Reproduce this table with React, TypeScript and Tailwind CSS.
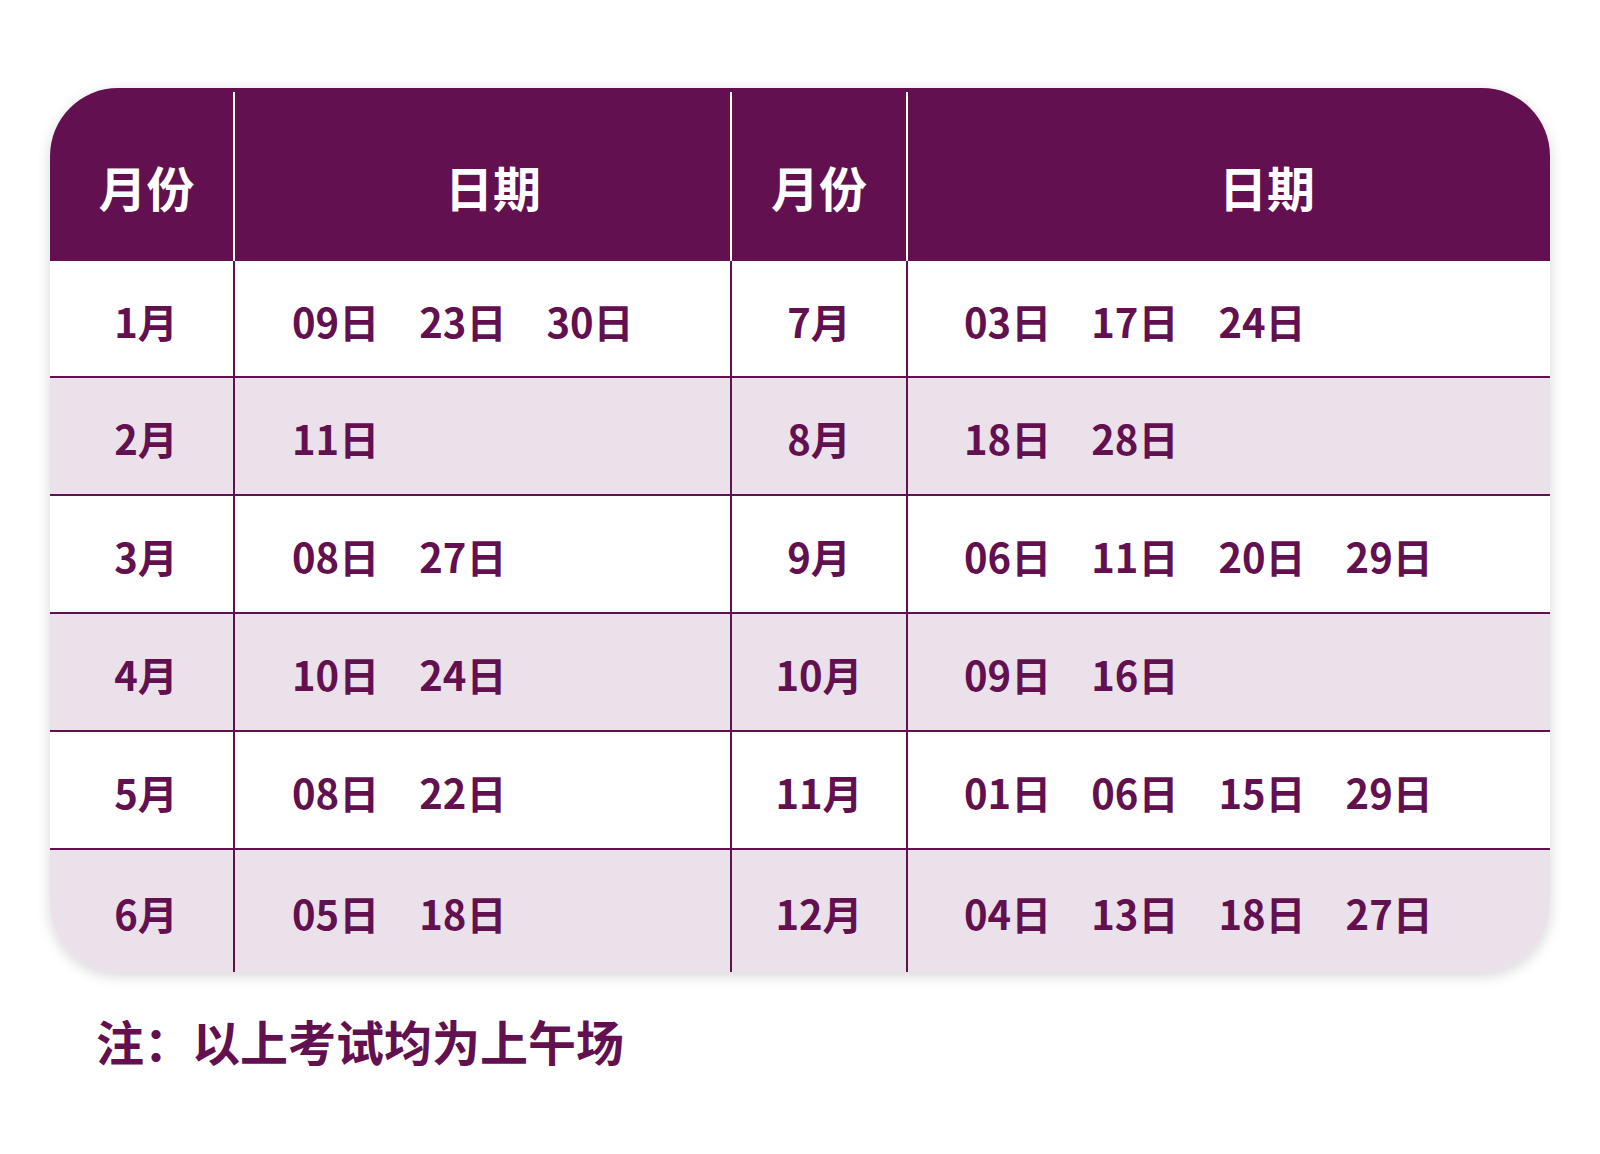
import React from 'react';

type Row = { m1: string; d1: string[]; m2: string; d2: string[] };

const rows: Row[] = [
  { m1: '1月', d1: ['09日', '23日', '30日'], m2: '7月', d2: ['03日', '17日', '24日'] },
  { m1: '2月', d1: ['11日'], m2: '8月', d2: ['18日', '28日'] },
  { m1: '3月', d1: ['08日', '27日'], m2: '9月', d2: ['06日', '11日', '20日', '29日'] },
  { m1: '4月', d1: ['10日', '24日'], m2: '10月', d2: ['09日', '16日'] },
  { m1: '5月', d1: ['08日', '22日'], m2: '11月', d2: ['01日', '06日', '15日', '29日'] },
  { m1: '6月', d1: ['05日', '18日'], m2: '12月', d2: ['04日', '13日', '18日', '27日'] },
];

const heights = ['h-[117px]', 'h-[118px]', 'h-[118px]', 'h-[118px]', 'h-[118px]', 'h-[122px]'];

const App: React.FC = () => {
  return (
    <div
      className="min-h-[1154px] w-[1600px] bg-white pt-[88px] pl-[50px]"
      style={{ fontFamily: '"Noto Sans CJK SC", "Noto Sans", sans-serif' }}
    >
      <div className="w-[1500px] overflow-hidden rounded-[68px] bg-white shadow-[0_4px_14px_rgba(0,0,0,0.16)]">
        {/* header */}
        <div className="bg-[#62104f] pt-[4px]">
          <div className="grid h-[169px] grid-cols-[183px_497px_176px_644px] text-[48px] font-bold text-white">
            <div className="flex items-center justify-center pl-[10px] pt-[18px]">月份</div>
            <div className="flex items-center border-l-2 border-white pl-[210px] pt-[18px]">日期</div>
            <div className="flex items-center justify-center border-l-2 border-white pt-[18px]">月份</div>
            <div className="flex items-center border-l-2 border-white pl-[311px] pt-[18px]">日期</div>
          </div>
        </div>

        {/* body */}
        {rows.map((r, i) => (
          <div
            key={r.m1}
            className={`grid grid-cols-[183px_497px_176px_644px] text-[40px] font-bold text-[#62104f] ${heights[i]} ${
              i % 2 === 1 ? 'bg-[#ebe1ea]' : 'bg-white'
            } ${i < rows.length - 1 ? 'border-b-2 border-[#62104f]' : ''}`}
          >
            <div className="flex items-center justify-center pl-[9px] pt-[4px]">{r.m1}</div>
            <div className="flex items-center border-l-2 border-[#62104f] pl-[57px] pt-[4px] whitespace-pre">
              {r.d1.join('　')}
            </div>
            <div className="flex items-center justify-center border-l-2 border-[#62104f] pt-[4px]">{r.m2}</div>
            <div className="flex items-center border-l-2 border-[#62104f] pl-[56px] pt-[4px] whitespace-pre">
              {r.d2.join('　')}
            </div>
          </div>
        ))}
      </div>

      <p className="mt-[32px] pl-[46px] text-[48px] font-bold text-[#62104f]">注：以上考试均为上午场</p>
    </div>
  );
};

export default App;
